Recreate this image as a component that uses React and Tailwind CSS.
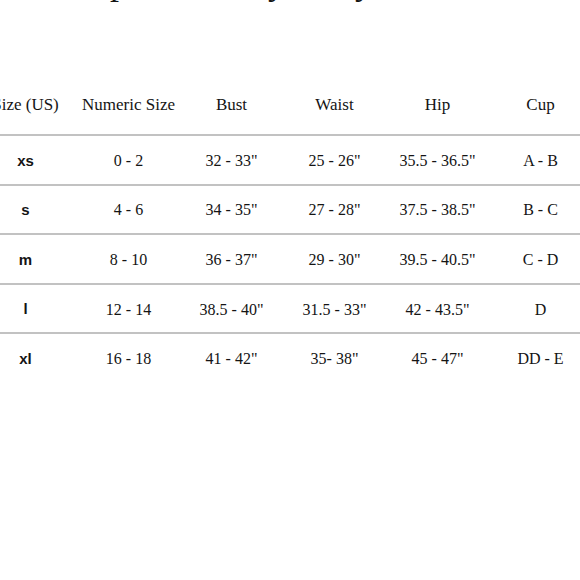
// Size chart — serif headings, bold sans size labels, rule between rows.

const COLUMNS = ['Size (US)', 'Numeric Size', 'Bust', 'Waist', 'Hip', 'Cup']

const ROWS = [
  ['xs', '0 - 2', '32 - 33"', '25 - 26"', '35.5 - 36.5"', 'A - B'],
  ['s', '4 - 6', '34 - 35"', '27 - 28"', '37.5 - 38.5"', 'B - C'],
  ['m', '8 - 10', '36 - 37"', '29 - 30"', '39.5 - 40.5"', 'C - D'],
  ['l', '12 - 14', '38.5 - 40"', '31.5 - 33"', '42 - 43.5"', 'D'],
  ['xl', '16 - 18', '41 - 42"', '35- 38"', '45 - 47"', 'DD - E'],
]

const serif = "font-['Liberation_Serif',serif]"

export default function App() {
  return (
    <div className="w-[580px] h-[580px] overflow-hidden bg-white text-[#141414]">
      {/* Title — mostly scrolled off the top */}
      <h1 className={`${serif} mt-[-36px] pl-[56px] text-[36px] leading-none whitespace-nowrap`}>
        Shape Guide by Body
      </h1>

      <div className="ml-[-26px] w-[618px]">
        {/* Header row */}
        <div className={`${serif} grid grid-cols-6 h-[134px] items-end pb-[17px] text-[17px] leading-6`}>
          {COLUMNS.map((c) => (
            <div key={c} className="text-center whitespace-nowrap">{c}</div>
          ))}
        </div>

        {/* Body rows */}
        {ROWS.map((row) => (
          <div
            key={row[0]}
            className="grid grid-cols-6 items-center h-[49.6px] pt-[2px] border-t-2 border-[#c2c2c2]"
          >
            {row.map((cell, j) => (
              <div
                key={j}
                className={
                  j === 0
                    ? "text-center font-['Liberation_Sans',sans-serif] font-bold text-[15px]"
                    : `text-center ${serif} text-[16px] whitespace-nowrap`
                }
              >
                {cell}
              </div>
            ))}
          </div>
        ))}
      </div>
    </div>
  )
}
